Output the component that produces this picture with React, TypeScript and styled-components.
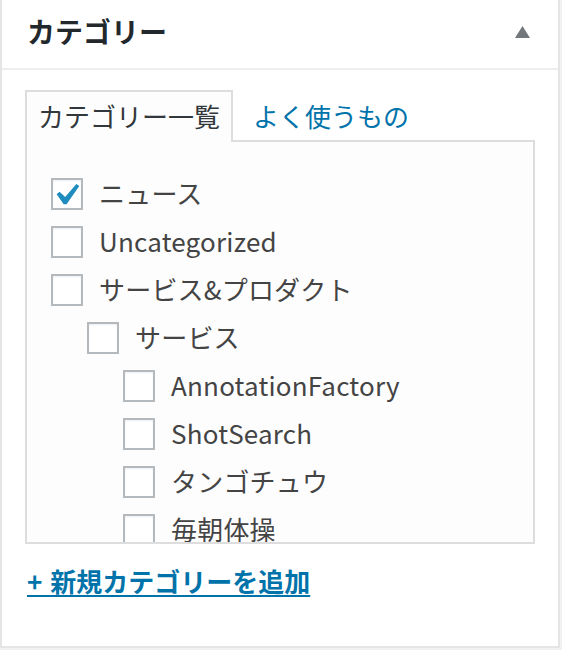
import React from 'react';
import styled, { createGlobalStyle } from 'styled-components';

const GlobalStyle = createGlobalStyle`
  html, body {
    margin: 0;
    padding: 0;
    background: #f1f1f1;
  }
  body {
    font-family: "Noto Sans CJK JP", "Noto Sans", sans-serif;
  }
`;

type Category = {
  name: string;
  level: number;
  checked?: boolean;
};

const categories: Category[] = [
  { name: 'ニュース', level: 0, checked: true },
  { name: 'Uncategorized', level: 0 },
  { name: 'サービス&プロダクト', level: 0 },
  { name: 'サービス', level: 1 },
  { name: 'AnnotationFactory', level: 2 },
  { name: 'ShotSearch', level: 2 },
  { name: 'タンゴチュウ', level: 2 },
  { name: '毎朝体操', level: 2 },
  { name: '研究', level: 1 },
];

const Postbox = styled.div`
  width: 556px;
  height: 646px;
  background: #fff;
  border: 2px solid #e5e5e5;
  border-top: none;
  display: flex;
  flex-direction: column;
`;

const Header = styled.div`
  height: 68px;
  border-bottom: 2px solid #eee;
  display: flex;
  align-items: center;
  justify-content: space-between;
  padding: 0 28px 0 25px;
`;

const Title = styled.h2`
  margin: 0;
  font-size: 28px;
  font-weight: 700;
  color: #23282d;
  line-height: 1;
  padding-bottom: 6px;
`;

const Toggle = styled.svg`
  width: 15px;
  height: 12px;
  margin-bottom: 4px;
  fill: #72777c;
`;

const Inside = styled.div`
  padding: 20px 23px 0 23px;
  display: flex;
  flex-direction: column;
`;

const Tabs = styled.div`
  display: flex;
  align-items: flex-end;
  position: relative;
  z-index: 1;
  margin-bottom: -2px;
`;

const Tab = styled.div<{ $active?: boolean }>`
  height: 52px;
  box-sizing: border-box;
  display: flex;
  align-items: center;
  padding: 0 11px 2px 11px;
  font-size: 26px;
  line-height: 1;
  color: ${(p) => (p.$active ? '#32373c' : '#0073aa')};
  background: ${(p) => (p.$active ? '#fdfdfd' : 'transparent')};
  border: 2px solid ${(p) => (p.$active ? '#ddd' : 'transparent')};
  border-bottom: none;
  padding-left: ${(p) => (p.$active ? '11px' : '18px')};
`;

const Panel = styled.div`
  height: 404px;
  box-sizing: border-box;
  border: 2px solid #ddd;
  background: #fdfdfd;
  overflow: hidden;
  padding: 28px 0 0 24px;
`;

const List = styled.ul`
  list-style: none;
  margin: 0;
  padding: 0;
`;

const Row = styled.li<{ $level: number }>`
  height: 48px;
  display: flex;
  align-items: center;
  padding-left: ${(p) => p.$level * 36}px;
`;

const Box = styled.span`
  width: 32px;
  height: 32px;
  box-sizing: border-box;
  border: 2px solid #b4b9be;
  background: #fff;
  box-shadow: inset 0 1px 2px rgba(0, 0, 0, 0.07);
  display: flex;
  align-items: center;
  justify-content: center;
  flex-shrink: 0;
`;

const Check = styled.svg`
  width: 24px;
  height: 22px;
  fill: #1e8cbe;
  margin-left: 1px;
`;

const Label = styled.span`
  margin-left: 16px;
  font-size: 26px;
  line-height: 1;
  color: #444;
  padding-bottom: 2px;
  letter-spacing: 0.2px;
`;

const Footer = styled.div`
  padding: 20px 0 0 2px;
`;

const AddLink = styled.a`
  display: inline-block;
  font-size: 26px;
  font-weight: 700;
  line-height: 1.3;
  color: #0073aa;
  text-decoration: underline;
  text-underline-offset: 3px;
  text-decoration-thickness: 2px;
  word-spacing: 2px;
`;

function CategoryRow({ item }: { item: Category }) {
  return (
    <Row $level={item.level}>
      <Box>
        {item.checked ? (
          <Check viewBox="5.5 4.6 11 9.8">
            <path d="M14.83 4.89l1.34.94-5.81 8.38H9.02L5.78 9.67l1.34-1.25 2.57 2.4z" />
          </Check>
        ) : null}
      </Box>
      <Label>{item.name}</Label>
    </Row>
  );
}

export default function App() {
  return (
    <>
      <GlobalStyle />
      <Postbox>
        <Header>
          <Title>カテゴリー</Title>
          <Toggle viewBox="0 0 15 12">
            <polygon points="7.5,0 15,12 0,12" />
          </Toggle>
        </Header>
        <Inside>
          <Tabs>
            <Tab $active>カテゴリー一覧</Tab>
            <Tab>よく使うもの</Tab>
          </Tabs>
          <Panel>
            <List>
              {categories.map((c) => (
                <CategoryRow key={c.name} item={c} />
              ))}
            </List>
          </Panel>
          <Footer>
            <AddLink href="#">+ 新規カテゴリーを追加</AddLink>
          </Footer>
        </Inside>
      </Postbox>
    </>
  );
}
